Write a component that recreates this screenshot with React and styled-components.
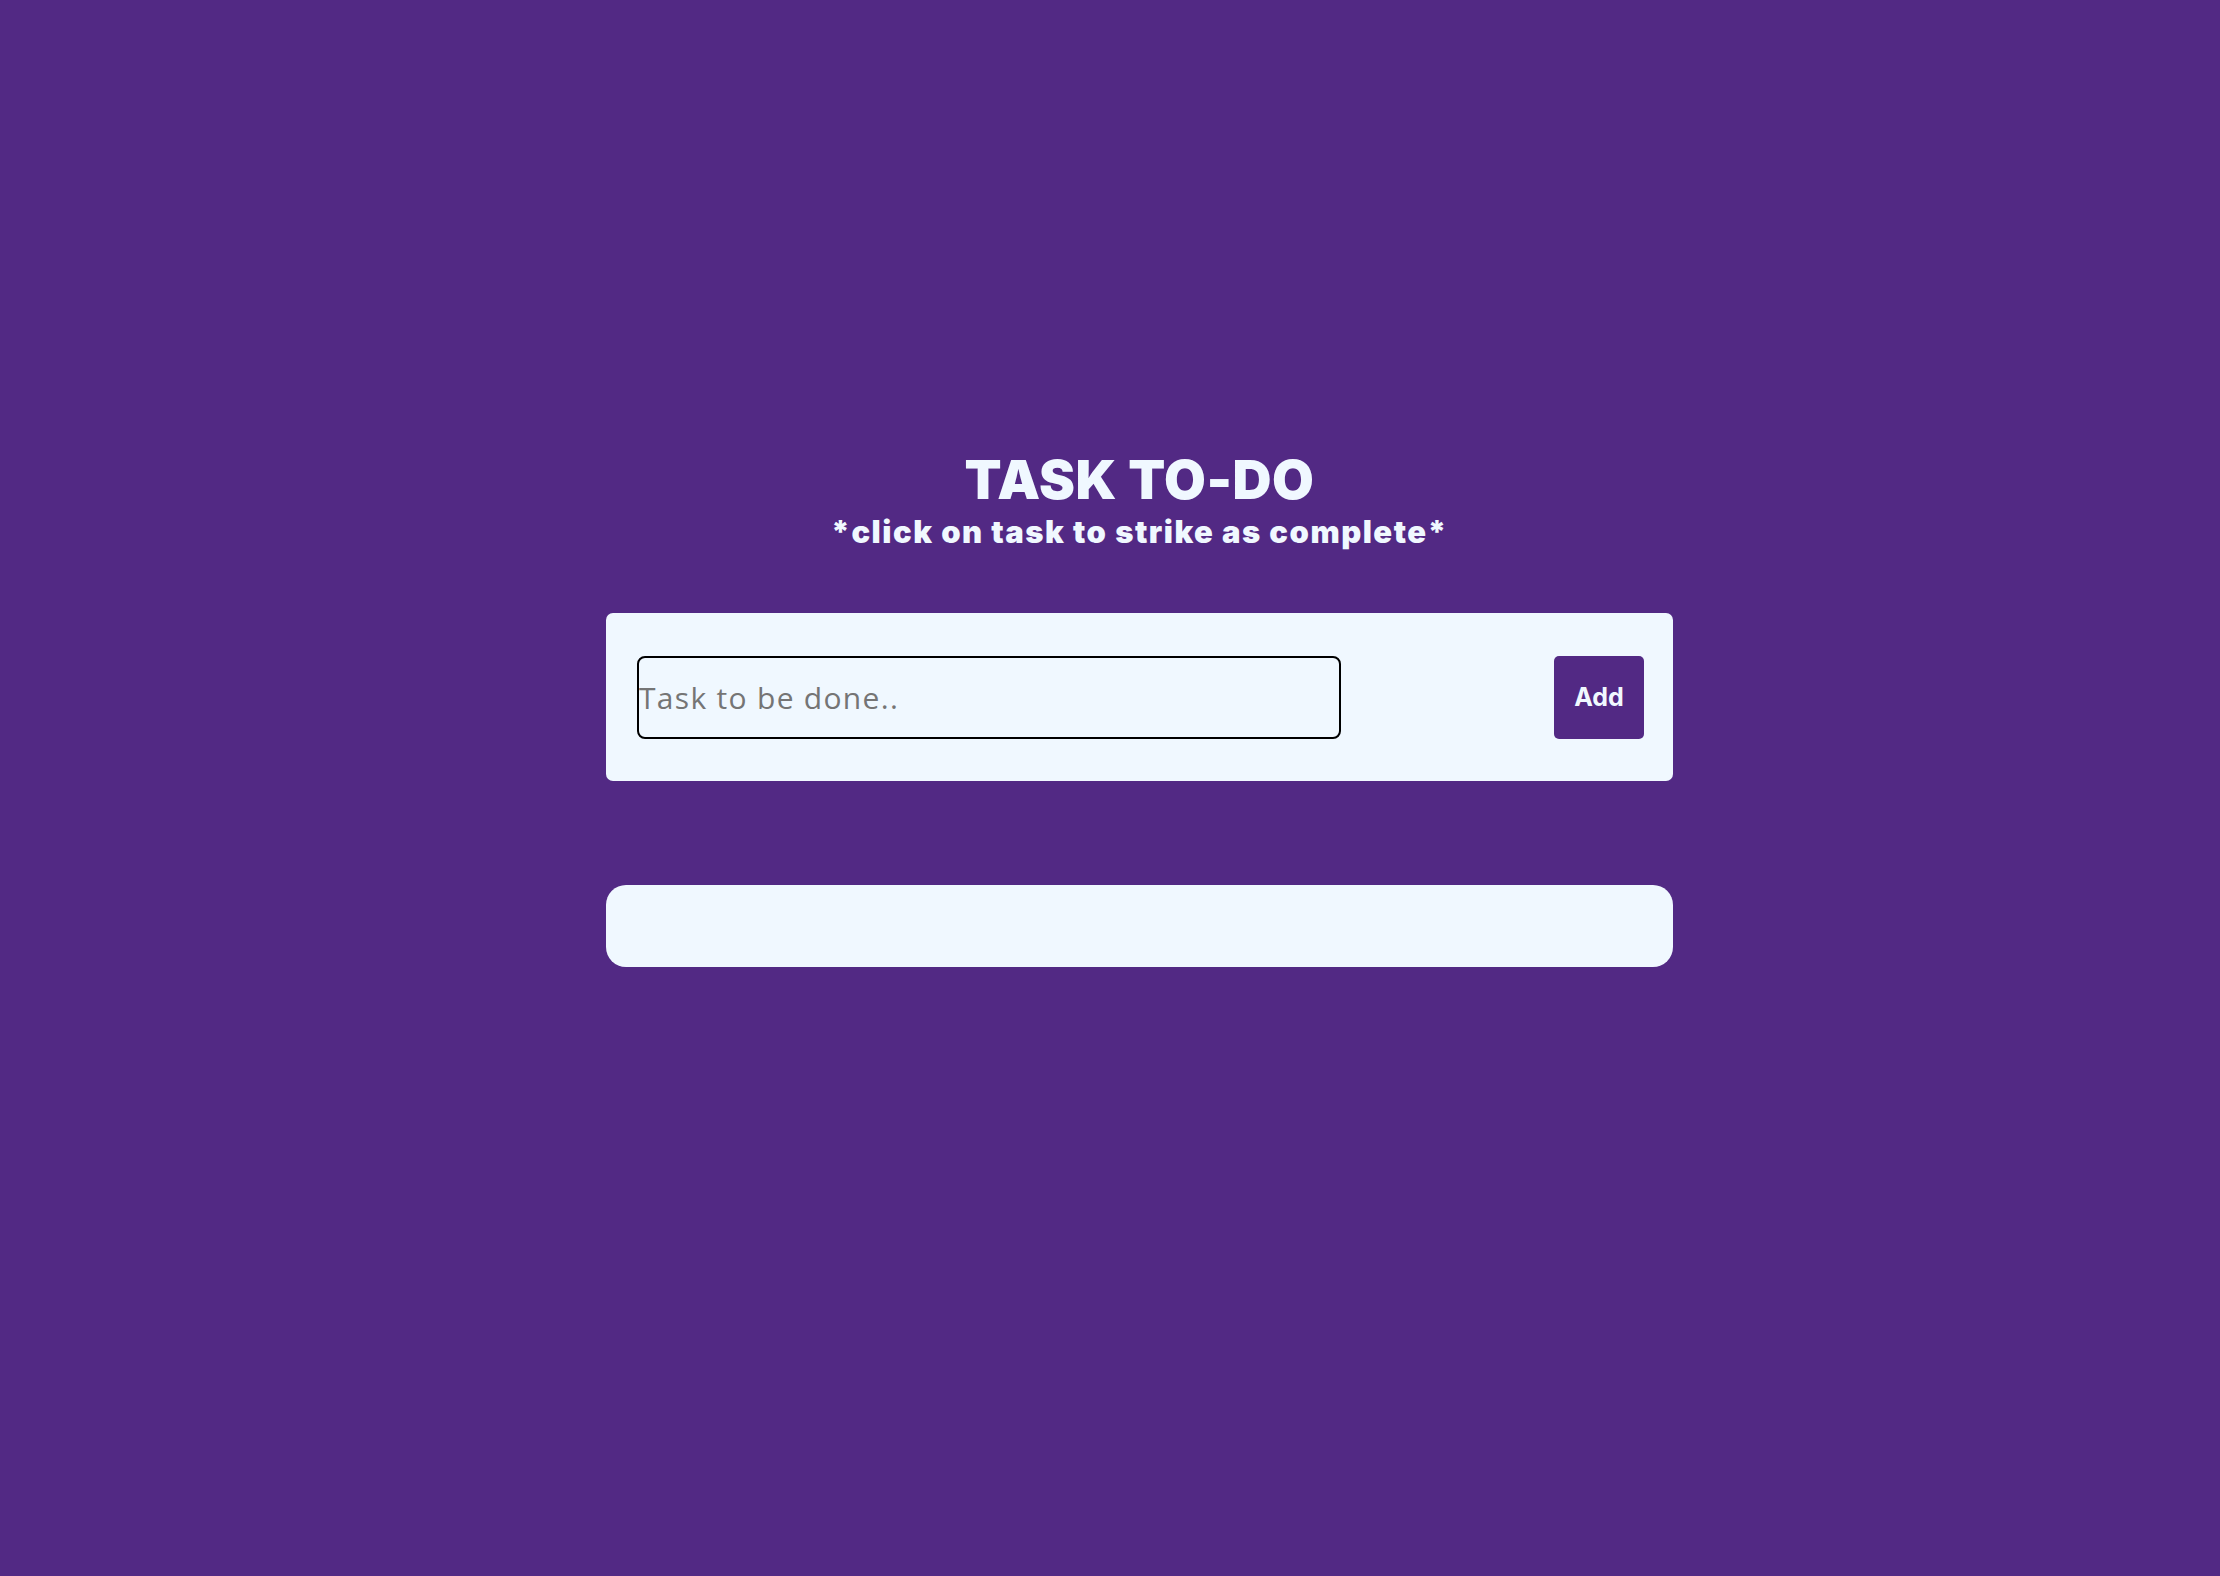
import styled, { createGlobalStyle } from "styled-components";

const GlobalStyle = createGlobalStyle`
  html, body {
    margin: 0;
    padding: 0;
    background: #522984;
  }
  body {
    min-height: 1576px;
    font-family: Inter, "Liberation Sans", sans-serif;
  }
`;

const Page = styled.div`
  min-height: 1576px;
  display: flex;
  flex-direction: column;
  align-items: center;
  padding: 448px 0 0 59px;
  box-sizing: border-box;
  background: #522984;
`;

const Header = styled.div`
  display: flex;
  flex-direction: column;
  align-items: center;
  color: #f0f8ff;
  text-align: center;
`;

const Title = styled.h1`
  margin: 0;
  font-family: Inter, sans-serif;
  font-weight: 900;
  font-size: 54px;
  line-height: 64px;
  letter-spacing: 0.5px;
`;

const Subtitle = styled.p`
  margin: 1px 0 0;
  font-family: Inter, sans-serif;
  font-weight: 900;
  font-size: 31px;
  line-height: 37px;
  letter-spacing: 1.5px;
`;

const InputCard = styled.form`
  margin-top: 63px;
  width: 1067px;
  height: 168px;
  box-sizing: border-box;
  padding: 0 29px 0 31px;
  background: #f0f8ff;
  border-radius: 7px;
  display: flex;
  align-items: center;
  justify-content: space-between;
`;

const TaskInput = styled.input`
  width: 704px;
  height: 83px;
  box-sizing: border-box;
  border: 2px solid #000;
  border-radius: 8px;
  background: #f0f8ff;
  padding: 0;
  font-family: "Open Sans", sans-serif;
  font-size: 30px;
  letter-spacing: 1.3px;
  color: #222;
  outline: none;
  &::placeholder {
    color: #757575;
  }
`;

const AddButton = styled.button`
  width: 90px;
  height: 83px;
  border: none;
  border-radius: 5px;
  background: #522984;
  color: #f0f8ff;
  font-family: Inter, sans-serif;
  font-weight: 700;
  font-size: 25px;
  cursor: pointer;
`;

const TaskList = styled.ul`
  margin: 104px 0 0;
  padding: 0;
  list-style: none;
  width: 1067px;
  height: 82px;
  background: #f0f8ff;
  border-radius: 20px;
`;

const App = () => {
  return (
    <>
      <GlobalStyle />
      <Page>
        <Header>
          <Title>TASK TO-DO</Title>
          <Subtitle>*click on task to strike as complete*</Subtitle>
        </Header>
        <InputCard onSubmit={(e) => e.preventDefault()}>
          <TaskInput type="text" placeholder="Task to be done.." />
          <AddButton type="submit">Add</AddButton>
        </InputCard>
        <TaskList />
      </Page>
    </>
  );
};

export default App;
